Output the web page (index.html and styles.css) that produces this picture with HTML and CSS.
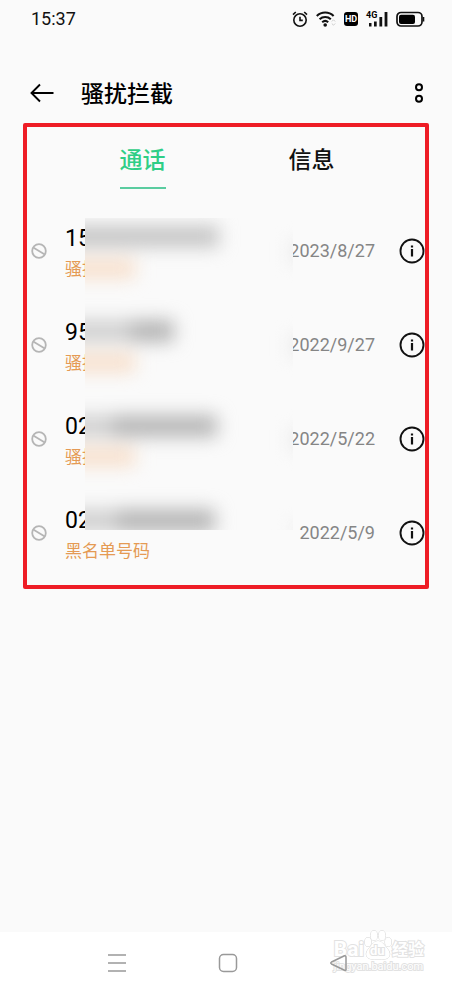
FILE: index.html
```html
<!DOCTYPE html>
<html lang="zh-CN">
<head>
<meta charset="utf-8">
<meta name="viewport" content="width=device-width, initial-scale=1">
<title>骚扰拦截</title>
<link rel="stylesheet" href="styles.css">
</head>
<body>
<svg class="sprite" aria-hidden="true">
  <symbol id="blocked" viewBox="0 0 16 16"><circle cx="8" cy="8" r="6.8" fill="none" stroke="currentColor" stroke-width="1.8"/><path d="M2.6 4.8 13.4 11.2" stroke="currentColor" stroke-width="1.8"/></symbol>
  <symbol id="info" viewBox="0 0 26 26"><circle cx="13" cy="13" r="11.5" fill="none" stroke="currentColor" stroke-width="1.9"/><path d="M13 11v7.5M13 7.5v2" stroke="currentColor" stroke-width="2.2"/></symbol>
</svg>

<div class="status">
  <time class="clock">15:37</time>
  <div class="indicators" aria-hidden="true">
    <svg class="alarm" width="16" height="18" viewBox="0 0 16 18" fill="none" stroke="#111" stroke-width="1.6"><circle cx="8" cy="10" r="6.2"/><path d="M8 6.8v3.6h2.8M1 4.6 3.8 2M15 4.6 12.2 2"/></svg>
    <svg class="wifi" width="20" height="18" viewBox="0 0 20 18" fill="none" stroke="#111" stroke-width="2.1"><path d="M.8 6a12 12 0 0 1 16.8 0M3.6 9.2a8.2 8.2 0 0 1 11.2 0M6.2 12.2a4.6 4.6 0 0 1 6 0"/><circle cx="9.2" cy="15" r="1.8" fill="#111" stroke="none"/><path d="m15.8 11.5 1.7-1.7 1.7 1.7M15.8 13.5l1.7 1.7 1.7-1.7" stroke="#ccc" stroke-width="1"/></svg>
    <span class="hd">HD</span>
    <span class="signal"><span class="net">4G</span><svg width="22" height="18" viewBox="0 0 22 18" fill="#111"><path d="M3 13h2.5v3.5H3zM8 11.5h2.7v5H8zM13.4 7h2.8v9.500h-2.800zM18.600 2h2.800v14.500h-2.800z"/></svg></span>
    <svg class="battery" width="29" height="18" viewBox="0 0 29 18"><rect x="1" y="2.5" width="25" height="13.5" rx="4" fill="none" stroke="#111" stroke-width="1.7"/><rect x="3" y="4.7" width="16" height="9.2" rx="2" fill="#000"/><path d="M26.8 7h1.5v4.5h-1.5z" fill="#111"/></svg>
  </div>
</div>

<header class="bar">
  <button class="icon-button" type="button" aria-label="返回"><svg width="24" height="20" viewBox="0 0 24 20" fill="none" stroke="#000" stroke-width="1.9"><path d="M23.5 10H1.5M10 1.5 1.5 10l8.5 8.5"/></svg></button>
  <h1>骚扰拦截</h1>
  <button class="icon-button" type="button" aria-label="更多"><svg width="10" height="20" viewBox="0 0 10 20" fill="none" stroke="#000" stroke-width="2"><circle cx="5" cy="4.3" r="3"/><circle cx="5" cy="15.7" r="3"/></svg></button>
</header>

<main class="panel">
  <nav class="tabs">
    <a class="tab active" href="#calls" aria-current="page">通话</a>
    <a class="tab" href="#messages">信息</a>
  </nav>
  <ul class="calls" id="calls">
    <li class="call">
      <svg class="blocked"><use href="#blocked"/></svg>
      <div class="caller"><span class="number">15</span><span class="reason">骚扰</span></div>
      <time class="date">2023/8/27</time>
      <button class="icon-button" type="button" aria-label="详情"><svg class="info"><use href="#info"/></svg></button>
    </li>
    <li class="call">
      <svg class="blocked"><use href="#blocked"/></svg>
      <div class="caller"><span class="number">95</span><span class="reason">骚扰</span></div>
      <time class="date">2022/9/27</time>
      <button class="icon-button" type="button" aria-label="详情"><svg class="info"><use href="#info"/></svg></button>
    </li>
    <li class="call">
      <svg class="blocked"><use href="#blocked"/></svg>
      <div class="caller"><span class="number">02</span><span class="reason">骚扰</span></div>
      <time class="date">2022/5/22</time>
      <button class="icon-button" type="button" aria-label="详情"><svg class="info"><use href="#info"/></svg></button>
    </li>
    <li class="call">
      <svg class="blocked"><use href="#blocked"/></svg>
      <div class="caller"><span class="number">02</span><span class="reason">黑名单号码</span></div>
      <time class="date">2022/5/9</time>
      <button class="icon-button" type="button" aria-label="详情"><svg class="info"><use href="#info"/></svg></button>
    </li>
  </ul>
  <div class="mask" aria-hidden="true">
    <svg width="208" height="312" viewBox="0 0 208 312">
      <defs><filter id="soft" x="-50%" y="-100%" width="200%" height="300%" color-interpolation-filters="sRGB"><feGaussianBlur stdDeviation="9"/></filter></defs>
      <g filter="url(#soft)">
        <path fill="#c4c4c4" d="M-30 8H134V29H-30z"/>
        <path fill="#d0d0d0" d="M-30 102H46V124H-30z"/><path fill="#b4b4b4" d="M46 102H89V124H46z"/>
        <path fill="#d0d0d0" d="M-30 197H28V219H-30z"/><path fill="#b6b6b6" d="M28 197H132V219H28z"/>
        <path fill="#d0d0d0" d="M-30 291H32V314H-30z"/><path fill="#b6b6b6" d="M32 291H130V314H32z"/>
        <path fill="#f7dfcb" d="M-30 41H50V60H-30zM-30 135H50V154H-30zM-30 229H50V248H-30z"/>
        <path fill="#e8e8e8" d="M206 24H226V44H206zM206 118H226V138H206zM206 212H226V232H206zM208 306H226V318H208z"/>
      </g>
    </svg>
  </div>
</main>

<footer class="system">
  <div class="watermark">
    <div class="brand"><span class="latin">Bai</span><span class="paw"><svg width="28" height="30" viewBox="0 0 28 30" fill="#fff" stroke="#d4d4d4"><ellipse cx="4" cy="12" rx="3.2" ry="4.5"/><ellipse cx="10" cy="5.5" rx="3.4" ry="4.7"/><ellipse cx="18" cy="5.5" rx="3.4" ry="4.7"/><ellipse cx="24.2" cy="12" rx="3.2" ry="4.5"/><path d="M14 11c3.500 0 5.500 3 7.500 5.500 2.500 3 5 5.500 4 9-1 3.500-5 3.800-8 3.500h-7c-3 .3-7 0-8-3.500-1-3.500 1.500-6 4-9C8.500 14 10.500 11 14 11z"/></svg><span class="du">du</span></span><span class="han">经验</span></div>
    <div class="site">jingyan.baidu.com</div>
  </div>
  <button class="icon-button" type="button" aria-label="最近任务"><svg width="20" height="20" viewBox="0 0 20 20" stroke="#999" stroke-width="1.5"><path d="M1 2h18M1 10h18M1 18h18"/></svg></button>
  <button class="icon-button" type="button" aria-label="主屏幕"><svg width="20" height="20" viewBox="0 0 20 20" fill="none" stroke="#999" stroke-width="1.5"><rect x="1.5" y="1.5" width="17" height="17" rx="4"/></svg></button>
  <button class="icon-button" type="button" aria-label="后退"><svg width="20" height="20" viewBox="0 0 20 20" fill="none" stroke="#999" stroke-width="1.5" stroke-linejoin="round"><path d="M17 4.500v12q0 1.500-1.500.8L2.500 11q-1.500-1 0-2L15.500 2.800q1.500-.6 1.500 1.700z"/></svg></button>
</footer>
</body>
</html>
```

FILE: styles.css
```css
* { box-sizing: border-box; }

body {
  margin: 0;
  min-height: 100vh;
  display: flex;
  flex-direction: column;
  background: #fafafa;
  color: #000;
  font-family: Roboto, "Noto Sans CJK SC", sans-serif;
}

.sprite { position: absolute; width: 0; height: 0; }
svg { display: block; flex: none; }

.icon-button {
  display: grid;
  place-items: center;
  padding: 0;
  border: 0;
  background: none;
  color: #111;
  cursor: pointer;
}

.status {
  display: flex;
  justify-content: space-between;
  align-items: center;
  height: 38px;
  padding: 0 27px 0 31px;
}

.clock { font-size: 18px; line-height: 24px; color: #111; }

.indicators { display: flex; align-items: center; gap: 8px; }

.hd {
  width: 14px;
  height: 14px;
  border-radius: 3px;
  background: #000;
  color: #fff;
  font-size: 9px;
  font-weight: 700;
  line-height: 14px;
  text-align: center;
}

.signal { position: relative; }
.net {
  position: absolute;
  left: 0;
  top: 0;
  font-size: 9px;
  font-weight: 700;
  line-height: 10px;
}

.bar {
  display: flex;
  align-items: center;
  height: 85px;
  padding: 24px 28px 0 30px;
}

.bar h1 {
  flex: 1;
  margin: 0 0 0 27px;
  padding-top: 4px;
  font-size: 23px;
  font-weight: 500;
  line-height: 32px;
}

.panel {
  position: relative;
  margin: 0 23px;
  padding-bottom: 5px;
  border: 4px solid #ee1c25;
  border-radius: 2px;
}

.tabs { display: flex; height: 77px; padding: 0 29px 0 31px; }

.tab {
  flex: 1;
  display: flex;
  justify-content: center;
  align-items: flex-start;
  padding-top: 18px;
  color: #111;
  font-size: 23px;
  font-weight: 500;
  line-height: 32px;
  text-decoration: none;
}

.tab.active { color: #2fce86; }
.tab.active::after {
  content: "";
  position: absolute;
  width: 46px;
  height: 2px;
  margin-top: 42px;
  background: #5acca0;
}

.calls { margin: 0; padding: 0; list-style: none; }

.call {
  display: flex;
  align-items: center;
  height: 94px;
  padding: 0 0 0 4px;
}

.blocked { width: 16px; height: 16px; color: #b5b5b5; }
.info { width: 26px; height: 26px; }

.caller {
  flex: 1;
  display: flex;
  flex-direction: column;
  gap: 4px;
  margin-left: 18px;
  padding-top: 4px;
}

.number { font-size: 23px; line-height: 28px; }
.reason { color: #e59a54; font-size: 17px; line-height: 24px; }

.date { margin-right: 24px; color: #858585; font-size: 18px; line-height: 24px; }

.mask {
  position: absolute;
  top: 91px;
  left: 58px;
  width: 208px;
  height: 312px;
  overflow: hidden;
  background: #fafafa;
}

.system {
  position: relative;
  display: grid;
  grid-template-columns: repeat(3, 1fr);
  height: 51px;
  margin-top: auto;
  padding: 10px 58px 0 62px;
  background: #fff;
}

.system .icon-button { z-index: 1; }

.watermark {
  position: absolute;
  right: 28px;
  bottom: 10px;
  color: #fff;
  font-weight: 700;
  -webkit-text-stroke: 2px #e2e2e2;
  paint-order: stroke fill;
  pointer-events: none;
}

.brand { display: flex; align-items: flex-end; height: 32px; }
.latin { font-size: 21px; line-height: 22px; }
.paw { position: relative; }
.du {
  position: absolute;
  left: 6px;
  bottom: 2px;
  font-size: 13px;
  line-height: 14px;
}
.han { font-size: 16px; line-height: 20px; }
.site { font-size: 11px; font-weight: 400; line-height: 13px; }
```
